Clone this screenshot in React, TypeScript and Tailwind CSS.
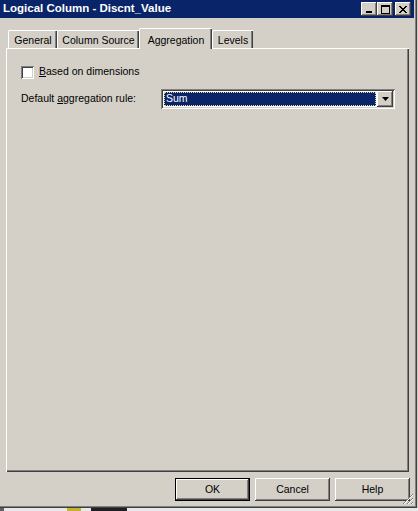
import React from "react";

const font = { fontFamily: '"Liberation Sans", Arial, sans-serif' };

// classic 3d bevels
const raised =
  "shadow-[inset_-1px_-1px_#404040,inset_1px_1px_#ffffff,inset_-2px_-2px_#808080,inset_2px_2px_#d4d0c8]";
const sunken =
  "shadow-[inset_1px_1px_#808080,inset_-1px_-1px_#ffffff,inset_2px_2px_#404040,inset_-2px_-2px_#d4d0c8]";

function TitleButton({ children }: { children: React.ReactNode }) {
  return (
    <div className={`w-[16px] h-[14px] bg-[#d4d0c8] flex items-center justify-center ${raised}`}>
      {children}
    </div>
  );
}

function Tab({ label, width, active }: { label: string; width: number; active?: boolean }) {
  return (
    <div
      style={{ width }}
      className={
        active
          ? "relative z-10 h-[21px] -mb-[1px] bg-[#d4d0c8] border-l border-t border-white rounded-tl-[2px] shadow-[inset_-1px_0_#404040,inset_-2px_0_#808080] flex items-start justify-center pt-[4px] text-[10.5px] text-black"
          : "h-[18px] bg-[#d4d0c8] border-l border-t border-white rounded-tl-[2px] shadow-[inset_-1px_0_#404040,inset_-2px_0_#808080] flex items-start justify-center pt-[2px] text-[10.5px] text-black"
      }
    >
      {label}
    </div>
  );
}

function Button({ label, isDefault }: { label: string; isDefault?: boolean }) {
  return (
    <div
      className={`w-[75px] h-[23px] bg-[#d4d0c8] flex items-center justify-center text-[10.5px] text-black ${
        isDefault ? "border border-black" : ""
      } ${raised}`}
    >
      {label}
    </div>
  );
}

export default function App() {
  return (
    <div style={font} className="w-[418px] h-[511px] bg-[#d4d0c8] overflow-hidden flex flex-col">
      <div className="w-[417px] h-[508px] bg-[#d4d0c8] flex flex-col shrink-0 shadow-[inset_-1px_-1px_#404040,inset_-2px_-2px_#808080] relative">
        {/* title bar */}
        <div className="w-[414px] h-[18px] bg-[#0a246a] flex items-center pl-[3px] pr-[3px]">
          <span className="text-[11.5px] font-bold text-white flex-1">Logical Column - Discnt_Value</span>
          <div className="flex items-center">
            <TitleButton>
              <div className="w-[6px] h-[2px] bg-black mt-[6px] -ml-[1px]" />
            </TitleButton>
            <TitleButton>
              <div className="w-[9px] h-[9px] border border-black border-t-2" />
            </TitleButton>
            <div className="w-[2px]" />
            <TitleButton>
              <svg width="8" height="7" viewBox="0 0 8 7">
                <path d="M0 0h2v1h-2zM6 0h2v1h-2zM1 1h2v1h-2zM5 1h2v1h-2zM2 2h4v1h-4zM3 3h2v1h-2zM2 4h4v1h-4zM1 5h2v1h-2zM5 5h2v1h-2zM0 6h2v1h-2zM6 6h2v1h-2z" fill="#000" />
              </svg>
            </TitleButton>
          </div>
        </div>

        {/* tabs */}
        <div className="flex items-end pl-[8px] mt-[10px] h-[20px]">
          <Tab label="General" width={49} />
          <Tab label="Column Source" width={82} />
          <Tab label="Aggregation" width={73} active />
          <Tab label="Levels" width={41} />
        </div>

        {/* panel */}
        <div className="ml-[6px] w-[403px] h-[424px] border-l border-t border-white shadow-[inset_-1px_-1px_#404040,inset_-2px_-2px_#808080] pl-[14px] pt-[16px]">
          <div className="flex items-center h-[14px]">
            <div className={`w-[13px] h-[13px] bg-white ${sunken}`} />
            <span className="ml-[5px] text-[10.5px] text-black">
              <span className="underline">B</span>ased on dimensions
            </span>
          </div>
          <div className="flex items-center mt-[10px] h-[20px]">
            <span className="w-[140px] text-[10.5px] text-black">
              Default <span className="underline">a</span>ggregation rule:
            </span>
            <div className={`w-[234px] h-[20px] bg-white flex items-stretch p-[2px] ${sunken}`}>
              <div className="flex-1 m-[1px] bg-[#0a246a] outline-1 outline-dotted outline-[#e8d890] -outline-offset-1 flex items-center pl-[2px] text-[10.5px] text-white">
                Sum
              </div>
              <div className={`w-[16px] bg-[#d4d0c8] flex items-center justify-center ${raised}`}>
                <svg width="7" height="4" viewBox="0 0 7 4">
                  <path d="M0 0h7L3.5 4z" fill="#000" />
                </svg>
              </div>
            </div>
          </div>
        </div>

        {/* buttons */}
        <div className="flex justify-end gap-[5px] mt-[6px] pr-[7px]">
          <Button label="OK" isDefault />
          <Button label="Cancel" />
          <Button label="Help" />
        </div>

        {/* resize grip */}
        <svg className="absolute right-[3px] bottom-[3px]" width="12" height="12" viewBox="0 0 12 12">
          <path d="M11 1L1 11M11 5L5 11M11 9L9 11" stroke="#808080" strokeWidth="1" />
          <path d="M11 2L2 11M11 6L6 11M11 10L10 11" stroke="#ffffff" strokeWidth="1" />
        </svg>
      </div>

      {/* desktop strip below the window */}
      <div className="h-[3px] bg-[#e8e8e8] flex items-start">
        <div className="w-[4px] h-[3px] bg-[#606060]" />
        <div className="w-[63px]" />
        <div className="w-[14px] h-[3px] bg-[#c8b030]" />
        <div className="w-[10px]" />
        <div className="w-[36px] h-[3px] bg-[#202020]" />
      </div>
    </div>
  );
}
